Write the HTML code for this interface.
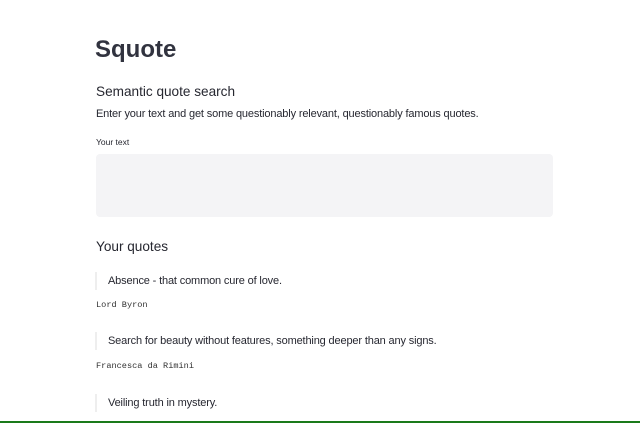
<!DOCTYPE html><html><head><style>
body{margin:0;width:640px;height:423px;background:#fff;position:relative;overflow:hidden;font-family:"Liberation Sans",sans-serif;color:#262730}
div{position:absolute;white-space:nowrap}
.q{left:95px;border-left:2px solid #eee;padding-left:11px;font-size:11px;letter-spacing:-0.15px;line-height:18px}
.a{left:96px;font-family:"Liberation Mono",monospace;font-size:8.6px;color:#333}
</style></head><body>
<div style="left:95px;top:36px;font-size:24px;font-weight:bold;color:#31333f">Squote</div>
<div style="left:96px;top:84px;font-size:13.6px">Semantic quote search</div>
<div style="left:96px;top:108px;font-size:11px;letter-spacing:-0.15px">Enter your text and get some questionably relevant, questionably famous quotes.</div>
<div style="left:96px;top:137px;font-size:8.5px">Your text</div>
<div style="left:96px;top:154px;width:457px;height:63px;background:#f4f4f6;border-radius:4px"></div>
<div style="left:96px;top:239px;font-size:13.6px">Your quotes</div>
<div class="q" style="top:272px">Absence - that common cure of love.</div>
<div class="a" style="top:300px">Lord Byron</div>
<div class="q" style="top:332px">Search for beauty without features, something deeper than any signs.</div>
<div class="a" style="top:361px">Francesca da Rimini</div>
<div class="q" style="top:394px">Veiling truth in mystery.</div>
<div style="left:0;top:421px;width:640px;height:2px;background:#1a7a1a"></div>
</body></html>
